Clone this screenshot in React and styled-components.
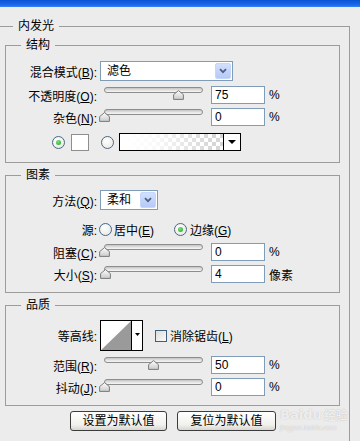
import React from "react";
import styled, { createGlobalStyle } from "styled-components";

const GlobalStyle = createGlobalStyle`
  html, body {
    margin: 0;
    padding: 0;
    background: #ececec;
  }
  body {
    font-family: "Liberation Sans", "Noto Sans CJK SC", sans-serif;
    font-size: 12px;
    color: #000;
  }
`;

const Window = styled.div`
  position: relative;
  width: 360px;
  height: 441px;
  overflow: hidden;
  background: #ececec;
`;

const TitleStrip = styled.div`
  height: 7px;
  background: linear-gradient(#0a52d2, #1a68ec 70%, #3b80f2);
`;

const Panel = styled.fieldset`
  box-sizing: border-box;
  width: 355px;
  min-width: 0;
  margin: 12px 0 0 -5px;
  padding: 0 9px 30px;
  border: 1px solid #9c9c9c;
`;

const Group = styled.fieldset`
  min-width: 0;
  margin: ${(p) => p.$top}px 0 0;
  padding: 0 0 ${(p) => p.$bottom}px;
  border: 1px solid #9c9c9c;
`;

const Title = styled.legend`
  margin-left: ${(p) => p.$indent}px;
  padding: 0 5px;
  font-size: 12px;
  line-height: 14px;
`;

const Row = styled.div`
  display: flex;
  align-items: center;
  height: ${(p) => p.$h || 18}px;
  margin-top: ${(p) => p.$mt || 0}px;
  padding-left: ${(p) => p.$pl || 0}px;
`;

const Label = styled.span`
  flex: none;
  width: 91px;
  text-align: right;
  white-space: nowrap;
`;

const Key = styled.u`
  text-decoration: underline;
`;

const Select = styled.div`
  box-sizing: border-box;
  display: flex;
  align-items: stretch;
  width: ${(p) => p.$w}px;
  height: 20px;
  margin-left: 3px;
  padding: 1px;
  border: 1px solid #7f9db9;
  background: #fff;
`;

const SelectText = styled.span`
  flex: 1;
  padding-left: 5px;
  line-height: 16px;
`;

const SelectButton = styled.span`
  box-sizing: border-box;
  width: 16px;
  display: flex;
  align-items: center;
  justify-content: center;
  border: 1px solid #c6d6fc;
  border-radius: 2px;
  background: linear-gradient(#d2e0fd, #b6c9f7);
`;

const Track = styled.div`
  position: relative;
  flex: none;
  align-self: stretch;
  width: 99px;
  margin-left: 7px;
`;

const Groove = styled.div`
  box-sizing: border-box;
  height: 6px;
  margin-top: 1px;
  border: 1px solid #8d8d8d;
  border-radius: 3px;
  background: linear-gradient(#c4c4c4, #e6e6e6 60%, #f6f6f6);
`;

const Thumb = styled.svg`
  position: absolute;
  top: 4px;
`;

const Field = styled.div`
  box-sizing: border-box;
  flex: none;
  width: 54px;
  height: 18px;
  margin-left: 8px;
  padding-left: 3px;
  border: 1px solid #7f9db9;
  background: #fff;
  line-height: 16px;
`;

const Unit = styled.span`
  margin-left: 4px;
`;

const Radio = styled.span`
  box-sizing: border-box;
  flex: none;
  display: flex;
  align-items: center;
  justify-content: center;
  width: 13px;
  height: 13px;
  margin-left: ${(p) => p.$ml || 0}px;
  border: 1px solid #4a6786;
  border-radius: 50%;
  background: radial-gradient(circle at 40% 35%, #fff, #e3e3de);

  &::after {
    content: "";
    display: ${(p) => (p.$on ? "block" : "none")};
    width: 5px;
    height: 5px;
    border-radius: 50%;
    background: radial-gradient(circle at 40% 35%, #7fe07f, #1fa01f);
  }
`;

const RadioText = styled.span`
  margin-left: ${(p) => p.$ml || 3}px;
  white-space: nowrap;
`;

const Swatch = styled.span`
  box-sizing: border-box;
  flex: none;
  width: 18px;
  height: 17px;
  margin-left: 6px;
  border: 1px solid #8e8e8e;
  background: #fff;
`;

const GradientPicker = styled.div`
  box-sizing: border-box;
  display: flex;
  width: 122px;
  height: 18px;
  margin-left: 5px;
  border: 1px solid #000;
  background: #fff;
`;

const GradientStrip = styled.span`
  flex: 1;
  border-right: 1px solid #000;
  background:
    linear-gradient(to right, #fff 5%, rgba(255, 255, 255, 0.85) 35%, rgba(255, 255, 255, 0) 90%),
    repeating-conic-gradient(#d6d6d6 0 25%, #fff 0 50%) 0 0 / 8px 8px;
`;

const DropPart = styled.span`
  width: ${(p) => p.$w}px;
  display: flex;
  justify-content: center;
  align-items: ${(p) => (p.$top ? "flex-start" : "center")};
  padding-top: ${(p) => (p.$top ? 12 : 0)}px;
  box-sizing: border-box;
  background: #fff;
`;

const ContourPicker = styled.div`
  box-sizing: border-box;
  display: flex;
  width: 43px;
  height: 31px;
  margin-left: 3px;
  border: 1px solid #000;
  background: #fff;
`;

const ContourCurve = styled.svg`
  display: block;
  border-right: 1px solid #000;
`;

const CheckBox = styled.span`
  box-sizing: border-box;
  flex: none;
  width: 12px;
  height: 12px;
  margin-left: 12px;
  border: 1px solid #3f5f80;
  background: linear-gradient(135deg, #dcdcd6, #fbfbfb);
`;

const ButtonBar = styled.div`
  display: flex;
  gap: 10px;
  margin-top: 5px;
  padding-left: 65px;
`;

const Button = styled.div`
  box-sizing: border-box;
  width: ${(p) => p.$w}px;
  height: 20px;
  border: 1px solid #3c3c3c;
  border-radius: 3px;
  background: linear-gradient(#ffffff, #f1f1ee 70%, #d9d6cf);
  text-align: center;
  line-height: 18px;
  white-space: nowrap;
`;

/* faint site watermark in the lower right corner */
const Watermark = styled.div`
  position: absolute;
  left: 280px;
  top: 408px;
  pointer-events: none;
  color: rgba(255, 255, 255, 0.8);
  text-shadow: 0 0 1px rgba(120, 120, 120, 0.55);
  line-height: 1;
`;

const MarkMain = styled.div`
  display: flex;
  align-items: flex-end;
  font-family: "DejaVu Sans", "Noto Sans CJK SC", sans-serif;
  font-weight: bold;
  font-size: 13px;
`;

const MarkCn = styled.span`
  margin-left: 2px;
  font-size: 12px;
  font-family: "Noto Sans CJK SC", sans-serif;
`;

const MarkSub = styled.div`
  margin-top: 3px;
  font-size: 7px;
`;

const Chevron = () => (
  <svg width="8" height="6" viewBox="0 0 8 6">
    <path d="M1 1.2 L4 4.2 L7 1.2" fill="none" stroke="#4d6185" strokeWidth="1.8" />
  </svg>
);

const Caret = ({ w = 8, h = 4 }) => (
  <svg width={w} height={h} viewBox={`0 0 ${w} ${h}`}>
    <path d={`M0 0 L${w} 0 L${w / 2} ${h} Z`} fill="#000" />
  </svg>
);

function Slider({ value }) {
  const left = (value / 100) * 99 - 5.5;
  return (
    <Track>
      <Groove />
      <Thumb width="11" height="10" viewBox="0 0 11 10" style={{ left }}>
        <defs>
          <linearGradient id="thumbFill" x1="0" y1="0" x2="0" y2="1">
            <stop offset="0" stopColor="#ffffff" />
            <stop offset="1" stopColor="#c9c9c9" />
          </linearGradient>
        </defs>
        <path d="M5.5 0.6 L10.4 4.6 L10.4 9.4 L0.6 9.4 L0.6 4.6 Z" fill="url(#thumbFill)" stroke="#7a7a7a" />
      </Thumb>
    </Track>
  );
}

function SliderRow({ label, k, value, field, unit = "%", mt }) {
  return (
    <Row $mt={mt}>
      <Label>
        {label}(<Key>{k}</Key>):
      </Label>
      <Slider value={value} />
      <Field>{field}</Field>
      <Unit>{unit}</Unit>
    </Row>
  );
}

export default function App() {
  return (
    <Window>
      <GlobalStyle />
      <TitleStrip />
      <Panel>
        <Title $indent={8}>内发光</Title>

        <Group $top={5} $bottom={11}>
          <Title $indent={15}>结构</Title>
          <Row $h={20} $mt={9}>
            <Label>
              混合模式(<Key>B</Key>):
            </Label>
            <Select $w={133}>
              <SelectText>滤色</SelectText>
              <SelectButton>
                <Chevron />
              </SelectButton>
            </Select>
          </Row>
          <SliderRow label="不透明度" k="O" value={75} field="75" mt={5} />
          <SliderRow label="杂色" k="N" value={0} field="0" mt={4} />
          <Row $mt={7} $pl={46}>
            <Radio $on />
            <Swatch />
            <Radio $ml={12} />
            <GradientPicker>
              <GradientStrip />
              <DropPart $w={16}>
                <Caret />
              </DropPart>
            </GradientPicker>
          </Row>
        </Group>

        <Group $top={5} $bottom={9}>
          <Title $indent={15}>图素</Title>
          <Row $h={20} $mt={8}>
            <Label>
              方法(<Key>Q</Key>):
            </Label>
            <Select $w={58}>
              <SelectText>柔和</SelectText>
              <SelectButton>
                <Chevron />
              </SelectButton>
            </Select>
          </Row>
          <Row $mt={10}>
            <Label>源:</Label>
            <Radio $ml={2} />
            <RadioText $ml={2}>
              居中(<Key>E</Key>)
            </RadioText>
            <Radio $ml={20} $on />
            <RadioText $ml={3}>
              边缘(<Key>G</Key>)
            </RadioText>
          </Row>
          <SliderRow label="阻塞" k="C" value={0} field="0" mt={5} />
          <SliderRow label="大小" k="S" value={1.6} field="4" unit="像素" mt={4} />
        </Group>

        <Group $top={5} $bottom={9}>
          <Title $indent={15}>品质</Title>
          <Row $h={31} $mt={8}>
            <Label>等高线:</Label>
            <ContourPicker>
              <ContourCurve width="31" height="29" viewBox="0 0 30 29">
                <path d="M0 29 L30 0 L30 29 Z" fill="#9a9a9a" />
              </ContourCurve>
              <DropPart $w={10} $top>
                <Caret w={5} h={3} />
              </DropPart>
            </ContourPicker>
            <CheckBox />
            <RadioText $ml={3}>
              消除锯齿(<Key>L</Key>)
            </RadioText>
          </Row>
          <SliderRow label="范围" k="R" value={50} field="50" mt={5} />
          <SliderRow label="抖动" k="J" value={0} field="0" mt={4} />
        </Group>

        <ButtonBar>
          <Button $w={97}>设置为默认值</Button>
          <Button $w={99}>复位为默认值</Button>
        </ButtonBar>
      </Panel>

      <Watermark>
        <MarkMain>
          Baidu<MarkCn>经验</MarkCn>
        </MarkMain>
        <MarkSub>jingyan.baidu.com</MarkSub>
      </Watermark>
    </Window>
  );
}
